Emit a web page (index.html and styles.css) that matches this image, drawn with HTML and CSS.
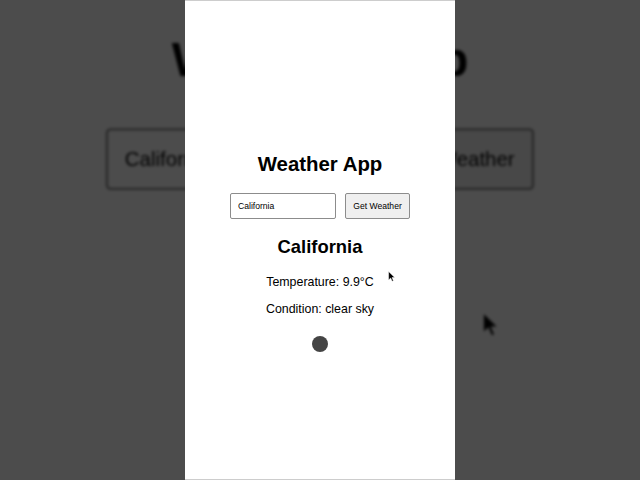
FILE: index.html
```html
<!DOCTYPE html>
<html lang="en">
<head>
<meta charset="utf-8">
<title>Weather App</title>
<link rel="stylesheet" href="styles.css">
</head>
<body>
<div class="stage">
  <div class="backdrop" aria-hidden="true">
    <div class="phone">
      <h1 class="title">Weather App</h1>
      <div class="search">
        <div class="field">California</div>
        <div class="btn">Get Weather</div>
      </div>
      <h2 class="city covered">California</h2>
      <p class="stat covered">Temperature: 9.9°C</p>
      <p class="stat stat-last covered">Condition: clear sky</p>
      <div class="dot covered"></div>
      <svg class="pointer" viewBox="0 0 12 19" width="7" height="11"><path d="M1 1 L1 15.5 L4.6 12.1 L7.1 17.8 L9.3 16.8 L6.9 11.3 L11.5 11.3 Z" fill="#000" stroke="#fff" stroke-width="0.8"/></svg>
    </div>
  </div>
  <main class="phone front">
    <h1 class="title">Weather App</h1>
    <div class="search">
      <input class="field" type="text" value="California">
      <button class="btn" type="button">Get Weather</button>
    </div>
    <h2 class="city">California</h2>
    <p class="stat">Temperature: 9.9°C</p>
    <p class="stat stat-last">Condition: clear sky</p>
    <div class="dot"></div>
    <svg class="pointer" viewBox="0 0 12 19" width="7" height="11"><path d="M1 1 L1 15.5 L4.6 12.1 L7.1 17.8 L9.3 16.8 L6.9 11.3 L11.5 11.3 Z" fill="#000" stroke="#fff" stroke-width="0.8"/></svg>
  </main>
</div>
</body>
</html>
```

FILE: styles.css
```css
html, body {
  margin: 0;
  padding: 0;
  background: #4d4d4d;
}

.stage {
  position: relative;
  width: 640px;
  height: 480px;
  overflow: hidden;
  background: #4d4d4d;
  display: flex;
  justify-content: center;
  font-family: "Liberation Sans", Arial, sans-serif;
  color: #000;
}

.backdrop {
  position: absolute;
  inset: 0;
  z-index: 0;
  display: flex;
  justify-content: center;
  transform: scale(2.38);
  transform-origin: 320px 240px;
  filter: brightness(0.3) blur(0.6px);
}

.covered {
  visibility: hidden;
}

.phone {
  position: relative;
  width: 270px;
  height: 480px;
  box-sizing: border-box;
  background: #fff;
  display: flex;
  flex-direction: column;
  align-items: center;
  padding-top: 152px;
}

.front {
  z-index: 1;
  border-top: 1px solid #cdcdcd;
  border-bottom: 1px solid #cdcdcd;
  padding-top: 151px;
}

.title {
  margin: 0;
  font-size: 20.4px;
  line-height: 24px;
  font-weight: 700;
}

.search {
  display: flex;
  gap: 9px;
  margin-top: 17px;
}

.field,
.btn {
  box-sizing: border-box;
  height: 26px;
  margin: 0;
  font-family: "Liberation Sans", Arial, sans-serif;
  font-size: 8.6px;
  color: #000;
  border: 1px solid #8c8c8c;
  border-radius: 2px;
  display: flex;
  align-items: center;
}

.field {
  width: 106px;
  padding: 0 7px;
  background: #fff;
  outline: none;
}

.btn {
  width: 65px;
  padding: 0;
  justify-content: center;
  background: #efefef;
}

.city {
  margin: 17px 0 0;
  font-size: 18.4px;
  line-height: 22px;
  font-weight: 700;
}

.stat {
  margin: 17px 0 0;
  font-size: 12.4px;
  line-height: 15px;
}

.stat-last {
  margin-top: 11.6px;
}

.dot {
  width: 16px;
  height: 16px;
  border-radius: 50%;
  background: #444;
  margin-top: 19.8px;
}

.pointer {
  position: absolute;
  left: 203px;
  top: 269.5px;
}
```
